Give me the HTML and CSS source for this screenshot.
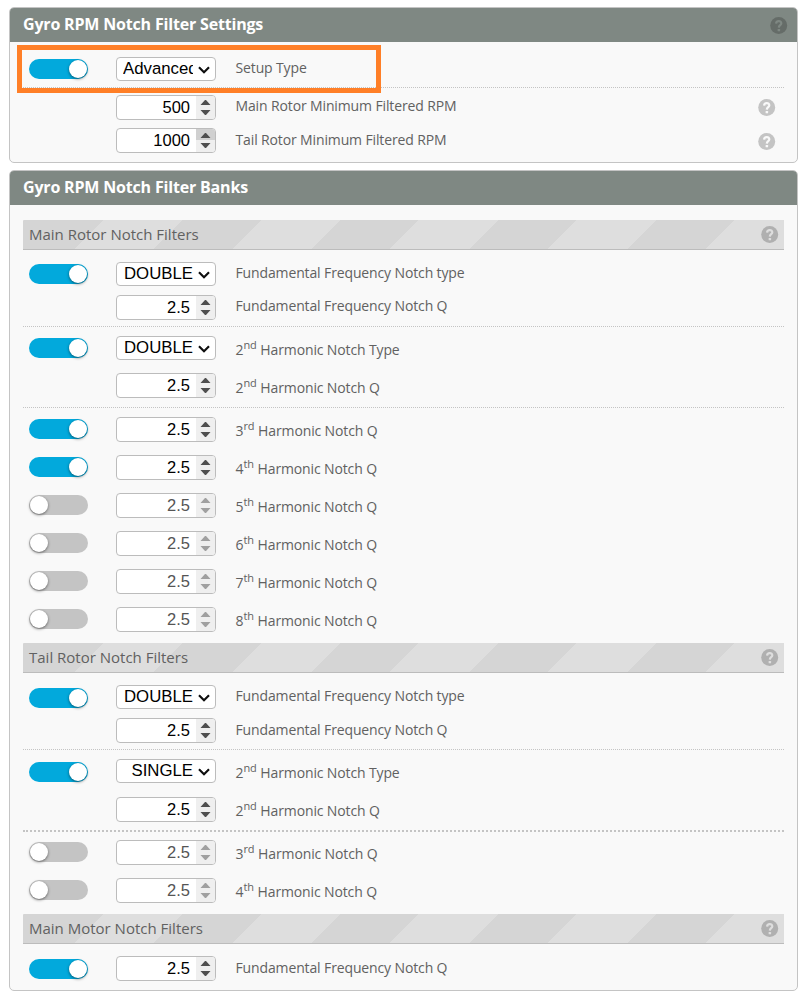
FILE: index.html
```html
<!DOCTYPE html>
<html lang="en">
<head>
<meta charset="utf-8">
<title>Gyro RPM Notch Filter</title>
<link rel="stylesheet" href="styles.css">
</head>
<body>
<svg class="defs" width="0" height="0">
  <symbol id="help" viewBox="0 0 18 18">
    <circle cx="8.7" cy="8.5" r="8.5"/>
    <path class="mark" d="M6.1 6.6C6.2 3.4 11.4 3.4 11.3 6.4C11.2 8.2 8.9 8.2 8.8 10.6"/>
    <rect class="dot" x="7.6" y="12" width="2.5" height="2.2" rx=".5"/>
  </symbol>
  <symbol id="chev" viewBox="0 0 12 8"><path d="M1 1.200L6 6.200L11 1.200"/></symbol>
  <symbol id="spin" viewBox="0 0 19 23"><path d="M4.500 9L9 4H10L14.500 9ZM4.500 14L9 19H10L14.500 14Z"/></symbol>
</svg>

<section class="panel">
  <h2>Gyro RPM Notch Filter Settings<svg class="help"><use href="#help"/></svg></h2>
  <div class="body">
    <div class="row setup line"><i class="toggle on"></i><div class="select clip"><span>Advanced</span><svg><use href="#chev"/></svg></div><label>Setup Type</label></div>
    <div class="row rpm"><div class="num"><span>500</span><svg><use href="#spin"/></svg></div><label>Main Rotor Minimum Filtered RPM</label><svg class="help"><use href="#help"/></svg></div>
    <div class="row rpm last"><div class="num active"><span>1000</span><svg><use href="#spin"/></svg></div><label>Tail Rotor Minimum Filtered RPM</label><svg class="help"><use href="#help"/></svg></div>
  </div>
  <div class="highlight"></div>
</section>

<section class="panel banks">
  <h2>Gyro RPM Notch Filter Banks</h2>
  <div class="body">
    <h3>Main Rotor Notch Filters<svg class="help"><use href="#help"/></svg></h3>
    <div class="row type"><i class="toggle on"></i><div class="select"><span>DOUBLE</span><svg><use href="#chev"/></svg></div><label>Fundamental Frequency Notch type</label></div>
    <div class="row q line"><div class="num"><span>2.5</span><svg><use href="#spin"/></svg></div><label>Fundamental Frequency Notch Q</label></div>
    <div class="row type2"><i class="toggle on"></i><div class="select"><span>DOUBLE</span><svg><use href="#chev"/></svg></div><label>2<sup>nd</sup> Harmonic Notch Type</label></div>
    <div class="row q2 line"><div class="num"><span>2.5</span><svg><use href="#spin"/></svg></div><label>2<sup>nd</sup> Harmonic Notch Q</label></div>
    <div class="row"><i class="toggle on"></i><div class="num"><span>2.5</span><svg><use href="#spin"/></svg></div><label>3<sup>rd</sup> Harmonic Notch Q</label></div>
    <div class="row"><i class="toggle on"></i><div class="num"><span>2.5</span><svg><use href="#spin"/></svg></div><label>4<sup>th</sup> Harmonic Notch Q</label></div>
    <div class="row"><i class="toggle"></i><div class="num off"><span>2.5</span><svg><use href="#spin"/></svg></div><label>5<sup>th</sup> Harmonic Notch Q</label></div>
    <div class="row"><i class="toggle"></i><div class="num off"><span>2.5</span><svg><use href="#spin"/></svg></div><label>6<sup>th</sup> Harmonic Notch Q</label></div>
    <div class="row"><i class="toggle"></i><div class="num off"><span>2.5</span><svg><use href="#spin"/></svg></div><label>7<sup>th</sup> Harmonic Notch Q</label></div>
    <div class="row end"><i class="toggle"></i><div class="num off"><span>2.5</span><svg><use href="#spin"/></svg></div><label>8<sup>th</sup> Harmonic Notch Q</label></div>

    <h3>Tail Rotor Notch Filters<svg class="help"><use href="#help"/></svg></h3>
    <div class="row type tail"><i class="toggle on"></i><div class="select"><span>DOUBLE</span><svg><use href="#chev"/></svg></div><label>Fundamental Frequency Notch type</label></div>
    <div class="row q tail line"><div class="num"><span>2.5</span><svg><use href="#spin"/></svg></div><label>Fundamental Frequency Notch Q</label></div>
    <div class="row type2 tail"><i class="toggle on"></i><div class="select"><span>SINGLE</span><svg><use href="#chev"/></svg></div><label>2<sup>nd</sup> Harmonic Notch Type</label></div>
    <div class="row q2 tail line thick"><div class="num"><span>2.5</span><svg><use href="#spin"/></svg></div><label>2<sup>nd</sup> Harmonic Notch Q</label></div>
    <div class="row third"><i class="toggle"></i><div class="num off"><span>2.5</span><svg><use href="#spin"/></svg></div><label>3<sup>rd</sup> Harmonic Notch Q</label></div>
    <div class="row end"><i class="toggle"></i><div class="num off"><span>2.5</span><svg><use href="#spin"/></svg></div><label>4<sup>th</sup> Harmonic Notch Q</label></div>

    <h3>Main Motor Notch Filters<svg class="help"><use href="#help"/></svg></h3>
    <div class="row motor"><i class="toggle on"></i><div class="num"><span>2.5</span><svg><use href="#spin"/></svg></div><label>Fundamental Frequency Notch Q</label></div>
  </div>
</section>
</body>
</html>
```
FILE: styles.css
```css
* { box-sizing: border-box; }
body {
  margin: 0;
  padding: 7px 5px 0 9px;
  background: #fff;
  color: #616161;
  font: 14px/20px "Open Sans", sans-serif;
}
.defs { position: absolute; }
.panel {
  position: relative;
  border: 1px solid #c4c4c4;
  border-radius: 5px;
  background: #f9f9f9;
  margin-bottom: 7px;
}
h2 {
  display: flex;
  align-items: center;
  justify-content: space-between;
  height: 34px;
  margin: 0;
  padding: 0 9px 2px 13px;
  border-radius: 4px 4px 0 0;
  background: #7f8883;
  color: #fff;
  font-size: 16px;
  font-weight: 700;
  letter-spacing: -.18px;
}
.banks h2 { margin-bottom: 15px; }
.body { padding: 0 13px; }
h3 {
  display: flex;
  align-items: center;
  justify-content: space-between;
  height: 30px;
  margin: 0;
  padding: 0 5px 2px 6px;
  border-bottom: 1px solid #bcbcbc;
  background: repeating-linear-gradient(135deg, #d5d5d5 1.4px, #d5d5d5 56.6px, #dedede 56.6px, #dedede 113.1px);
  font-size: 15px;
  font-weight: 400;
}

/* Rows: switch, control, description, help */
.row {
  --control: 9px;
  --switch: 11px;
  --text: 13px;
  display: grid;
  grid-template-columns: 93px 119.500px 1fr 26px;
  align-items: start;
  height: 38px;
}
.line { border-bottom: 1px dotted #c4c4c4; }
.thick { border-bottom-width: 2px; }
.setup { --control: 15px; --switch: 17px; --text: 16px; height: 46px; }
.rpm { --control: 7px; --text: 8px; height: 33px; }
.rpm.last { --text: 9px; height: 41px; }
.type { --control: 12px; --switch: 14px; height: 37px; }
.type.tail { --switch: 15px; }
.q { --control: 8px; --text: 9px; height: 40px; }
.q.tail { --text: 10px; }
.type2 { height: 37px; }
.type2.tail { --switch: 12px; }
.q2 { --text: 14px; height: 44px; }
.q2.tail { --control: 10px; height: 45px; }
.third { --control: 8px; --switch: 10px; --text: 12px; height: 37px; }
.end { height: 45px; }
.motor { --control: 12px; --switch: 15px; --text: 14px; height: 46px; }

label {
  grid-column: 3;
  grid-row: 1;
  margin-top: var(--text);
  letter-spacing: -.13px;
  white-space: nowrap;
}
sup { font-size: 11px; line-height: 0; letter-spacing: 0; vertical-align: 6px; }

.toggle {
  grid-column: 1;
  width: 59px;
  height: 20px;
  margin: var(--switch) 0 0 6px;
  padding: 1px;
  border-radius: 10px;
  background: #c4c4c4;
}
.toggle::before {
  content: "";
  display: block;
  width: 18px;
  height: 18px;
  border-radius: 50%;
  background: #fff;
  box-shadow: 0 1px 3px rgba(0, 0, 0, .5);
}
.toggle.on { background: #02a9dc; }
.toggle.on::before { margin-left: 39px; }

.select, .num {
  grid-column: 2;
  grid-row: 1;
  display: flex;
  width: 100px;
  margin-top: var(--control);
  border: 1px solid #bcbcbc;
  border-radius: 4px;
  background: #fff;
  color: #000;
  font: 16.500px/22px "Liberation Sans", Arial, sans-serif;
  overflow: hidden;
}
.select { height: 24px; font-size: 16.800px; line-height: 21px; }
.select span { flex: 1; overflow: hidden; text-align: right; }
.select.clip span { margin-left: 6px; text-align: left; }
.select svg {
  width: 12px;
  height: 8px;
  margin: 8px 5px 0 5px;
  fill: none;
  stroke: #111;
  stroke-width: 2.2;
}
.num { height: 25px; }
.num span { flex: 1; padding-right: 6px; text-align: right; line-height: 23px; }
.num svg { width: 19px; height: 23px; background: #efefef; fill: #4f4f4f; }
.num.active svg { background: linear-gradient(#d0d0d0 11px, #efefef 11px); }
.num.off { color: #555; }
.num.off svg { fill: #a0a0a0; }

.help { width: 18px; height: 18px; fill: #c4c4c4; color: #f9f9f9; }
.mark { fill: none; stroke: currentColor; stroke-width: 2.2; }
.dot { fill: currentColor; }
.row .help { grid-column: 4; grid-row: 1; margin-top: 11px; }
.rpm.last .help { margin-top: 12px; }
h2 .help { margin-top: 3px; fill: #656c68; color: #7f8883; }
h3 .help { margin-top: 2px; fill: #b0b0b0; color: #dedede; }

.highlight {
  position: absolute;
  left: 7px;
  top: 37px;
  width: 364px;
  height: 48px;
  border: 5px solid #ff7f27;
}
```
